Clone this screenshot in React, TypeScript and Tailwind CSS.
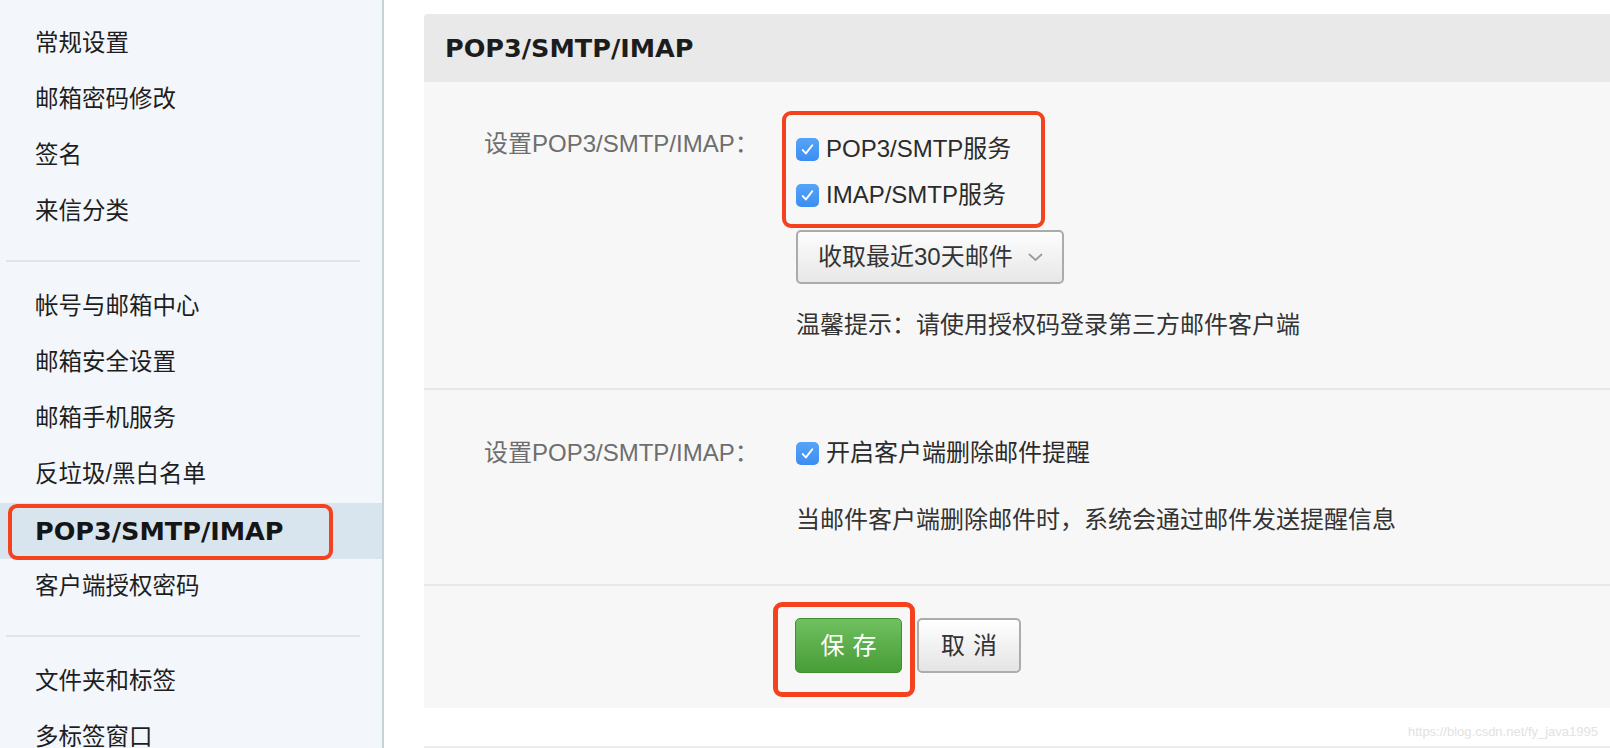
const menuGroups = [
  ['常规设置', '邮箱密码修改', '签名', '来信分类'],
  ['帐号与邮箱中心', '邮箱安全设置', '邮箱手机服务', '反垃圾/黑白名单', 'POP3/SMTP/IMAP', '客户端授权密码'],
  ['文件夹和标签', '多标签窗口'],
]

const cjk = "font-['Liberation_Sans','Noto_Sans_CJK_SC',sans-serif]"
const bold = "font-['DejaVu_Sans','Noto_Sans_CJK_SC',sans-serif] font-bold"

function Checkbox() {
  return (
    <span className="flex h-[23px] w-[23px] shrink-0 items-center justify-center rounded-[5px] bg-gradient-to-b from-[#56a4f8] to-[#3a8ef3]">
      <svg width="17" height="17" viewBox="0 0 16 16" fill="none">
        <path d="M3.5 8.5l3 3.2L12.5 4" stroke="white" strokeWidth="1.8" strokeLinecap="round" strokeLinejoin="round" />
      </svg>
    </span>
  )
}

function CheckRow({ label }: { label: string }) {
  return (
    <div className="flex h-[46px] items-center gap-[7px] text-[24px] text-[#2b2b2b]">
      <Checkbox />
      <span>{label}</span>
    </div>
  )
}

function Sidebar() {
  return (
    <aside className={`h-full w-[384px] shrink-0 border-r-2 border-[#c6d1da] bg-[#f3f7fb] pt-[16px] ${cjk}`}>
      {menuGroups.map((group, gi) => (
        <div key={gi}>
          {gi > 0 && <div className="mb-[17px] ml-[6px] mt-[20px] h-[2px] w-[354px] bg-[#e2e4e6]" />}
          {group.map((item) => {
            const active = item === 'POP3/SMTP/IMAP'
            return (
              <div
                key={item}
                className={`relative flex h-[56px] items-center pl-[35px] ${active ? 'bg-[#d8e4ee]' : ''}`}
              >
                {active ? (
                  <>
                    <span className={`text-[25.5px] text-[#151515] ${bold}`}>{item}</span>
                    <span className="absolute left-[8px] top-[1px] h-[56px] w-[325px] rounded-[9px] border-[4px] border-[#f4421f]" />
                  </>
                ) : (
                  <span className="text-[23.5px] text-[#1e1e1e]">{item}</span>
                )}
              </div>
            )
          })}
        </div>
      ))}
    </aside>
  )
}

export default function App() {
  return (
    <div className="relative flex h-[748px] w-full overflow-hidden bg-white">
      <Sidebar />
      <main className={`flex-1 pl-[40px] pt-[14px] ${cjk}`}>
        <section className="rounded-tl-[4px] bg-[#f7f7f7]">
          <div className="flex h-[68px] items-center rounded-tl-[4px] bg-[#e9e9e9] pl-[21px]">
            <h2 className={`text-[25.5px] text-[#1c1c1c] ${bold}`}>POP3/SMTP/IMAP</h2>
          </div>

          <div className="grid grid-cols-[312px_1fr] pb-[47px] pl-[60px] pt-[44px]">
            <div className="mt-[2px] text-[24px] leading-[32px] text-[#6e6e6e]">设置POP3/SMTP/IMAP：</div>
            <div>
              <div className="relative">
                <CheckRow label="POP3/SMTP服务" />
                <CheckRow label="IMAP/SMTP服务" />
                <span className="absolute -left-[14px] -top-[15px] h-[117px] w-[263px] rounded-[9px] border-[4px] border-[#f4421f]" />
              </div>
              <button className="mt-[12px] flex h-[54px] w-[268px] items-center rounded-[5px] border-2 border-[#ababab] bg-gradient-to-b from-[#fdfdfd] to-[#e7e7e7] pl-[20px] text-[24px] text-[#333]">
                <span>收取最近30天邮件</span>
                <svg className="ml-[15px]" width="15" height="9" viewBox="0 0 15 9" fill="none">
                  <path d="M1.5 1.5l6 5.5 6-5.5" stroke="#9a9a9a" strokeWidth="1.8" strokeLinecap="round" />
                </svg>
              </button>
              <p className="mt-[25px] text-[24px] leading-[32px] text-[#333]">温馨提示：请使用授权码登录第三方邮件客户端</p>
            </div>
          </div>

          <div className="h-[2px] bg-[#e8e8e8]" />

          <div className="grid grid-cols-[312px_1fr] pb-[48px] pl-[60px] pt-[40px]">
            <div className="mt-[7px] text-[24px] leading-[32px] text-[#6e6e6e]">设置POP3/SMTP/IMAP：</div>
            <div>
              <CheckRow label="开启客户端删除邮件提醒" />
              <p className="mt-[28px] text-[24px] leading-[32px] text-[#333]">当邮件客户端删除邮件时，系统会通过邮件发送提醒信息</p>
            </div>
          </div>

          <div className="h-[2px] bg-[#e8e8e8]" />

          <div className="flex gap-[15px] pb-[35px] pl-[371px] pt-[32px]">
            <div className="relative">
              <button className="h-[55px] w-[107px] rounded-[5px] border border-[#3f8e31] bg-gradient-to-b from-[#70c060] to-[#479d36] text-[24px] tracking-[8px] text-white">
                <span className="pl-[8px]">保存</span>
              </button>
              <span className="absolute -left-[22px] -top-[16px] h-[95px] w-[142px] rounded-[9px] border-[5px] border-[#f4421f]" />
            </div>
            <button className="h-[55px] w-[104px] rounded-[5px] border-2 border-[#acacac] bg-gradient-to-b from-[#ffffff] to-[#e4e4e4] text-[24px] tracking-[8px] text-[#333]">
              <span className="pl-[8px]">取消</span>
            </button>
          </div>
        </section>
        <div className="mt-[38px] h-[2px] bg-[#ececec]" />
      </main>
      <span className="absolute bottom-[7px] right-[12px] font-['Liberation_Sans',sans-serif] text-[13px] text-[#e2e2e2]">
        https://blog.csdn.net/fy_java1995
      </span>
    </div>
  )
}
